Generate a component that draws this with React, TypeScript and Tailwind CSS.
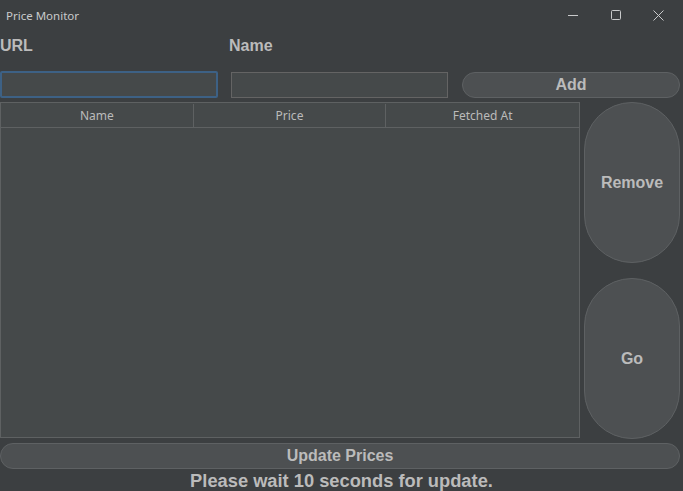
import React from "react";

const ui = { fontFamily: '"Liberation Sans", Arial, sans-serif' };
const sys = { fontFamily: '"Noto Sans", "Open Sans", sans-serif' };

const TitleBar = () => (
  <div className="flex h-[30px] shrink-0 items-center justify-between pr-[3px]">
    <span className="pl-[6px] pt-[1px] text-[11.5px] text-[#c9cacb]" style={sys}>
      Price Monitor
    </span>
    <div className="flex items-center text-[#c9cacb]">
      <div className="flex h-[30px] w-[43px] items-center justify-center">
        <svg width="10" height="10" viewBox="0 0 10 10">
          <path d="M0 5.5h10" stroke="currentColor" strokeWidth="1" />
        </svg>
      </div>
      <div className="flex h-[30px] w-[43px] items-center justify-center">
        <svg width="10" height="10" viewBox="0 0 10 10">
          <rect x="0.5" y="0.5" width="9" height="9" rx="1" fill="none" stroke="currentColor" strokeWidth="1" />
        </svg>
      </div>
      <div className="flex h-[30px] w-[43px] items-center justify-center">
        <svg width="11" height="11" viewBox="0 0 11 11">
          <path d="M0.5 0.5l10 10M10.5 0.5l-10 10" stroke="currentColor" strokeWidth="1" />
        </svg>
      </div>
    </div>
  </div>
);

const PillButton = ({ label, className }: { label: string; className: string }) => (
  <button
    className={`flex shrink-0 items-center justify-center rounded-full border border-[#5e6163] bg-[#4d5052] text-[16px] font-bold text-[#bbbbbb] ${className}`}
    style={ui}
  >
    {label}
  </button>
);

export default function App() {
  return (
    <div className="flex h-[491px] w-[683px] flex-col overflow-hidden bg-[#3c3f41]">
      <TitleBar />

      <div className="flex h-[30px] shrink-0 items-center pt-[2px] text-[16px] font-bold text-[#bbbbbb]" style={ui}>
        <span className="w-[229px]">URL</span>
        <span>Name</span>
      </div>

      <div className="mt-[11px] flex h-[27px] shrink-0 items-center">
        <div className="h-[27px] w-[218px] rounded-[2px] border-2 border-[#3d6185] bg-[#45494a]" />
        <div className="ml-[13px] h-[26px] w-[217px] border border-[#646464] bg-[#45494a]" />
        <PillButton label="Add" className="ml-[14px] h-[26px] w-[218px]" />
      </div>

      <div className="mt-[4px] flex shrink-0">
        <div className="flex h-[336px] w-[580px] flex-col border border-[#5e6162] bg-[#45494a]">
          <div
            className="grid h-[25px] grid-cols-3 border-b border-[#5e6162] pt-[1px] text-[12px] text-[#bbbbbb]"
            style={sys}
          >
            <div className="flex items-center justify-center border-r border-[#5e6162]">Name</div>
            <div className="flex items-center justify-center border-r border-[#5e6162]">Price</div>
            <div className="flex items-center justify-center">Fetched At</div>
          </div>
        </div>
        <div className="ml-[4px] flex w-[96px] flex-col gap-[15px]">
          <PillButton label="Remove" className="h-[161px] w-[96px]" />
          <PillButton label="Go" className="h-[161px] w-[96px]" />
        </div>
      </div>

      <PillButton label="Update Prices" className="mt-[4px] h-[26px] w-[680px]" />

      <div
        className="flex h-[23px] shrink-0 items-center justify-center text-[18.3px] font-bold text-[#bbbbbb]"
        style={ui}
      >
        Please wait 10 seconds for update.
      </div>
    </div>
  );
}
